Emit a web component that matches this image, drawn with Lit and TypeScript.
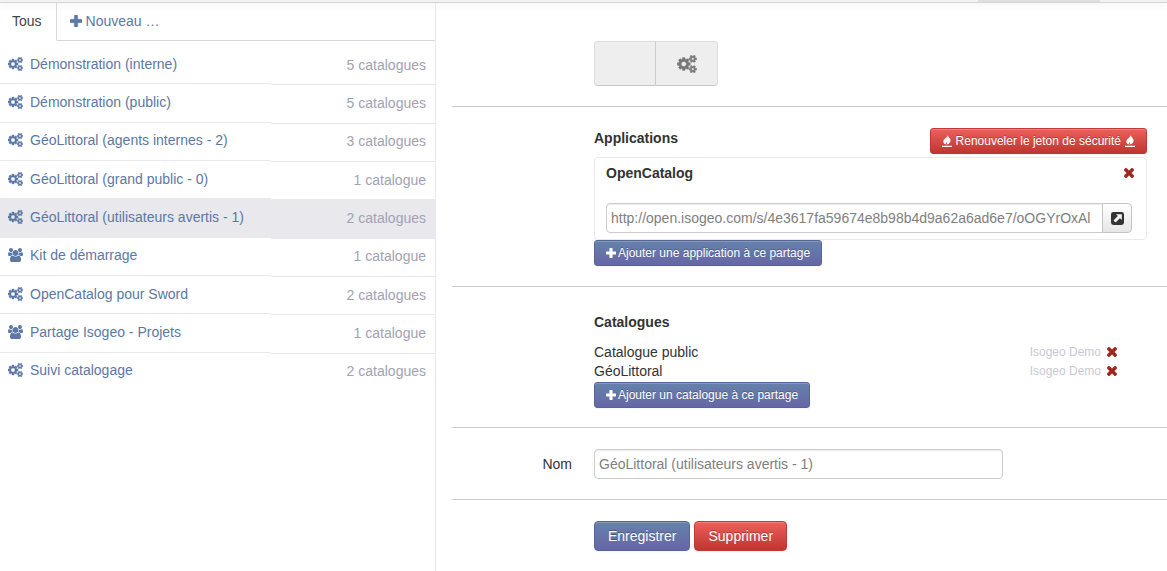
import { LitElement, html, css, svg, nothing } from "lit";
import { customElement } from "lit/decorators.js";
import { classMap } from "lit/directives/class-map.js";

const COGS =
  "M896 896q0-106-75-181t-181-75-181 75-75 181 75 181 181 75 181-75 75-181zm768 512q0-52-38-90t-90-38-90 38-38 90q0 53 37.5 90.5t90.5 37.5 90.5-37.5 37.5-90.5zm0-1024q0-52-38-90t-90-38-90 38-38 90q0 53 37.5 90.5t90.5 37.5 90.5-37.5 37.5-90.5zm-384 421v185q0 10-7 19.5t-16 10.5l-155 24q-11 35-32 76 34 48 90 115 7 11 7 20 0 12-7 19-23 30-82.5 89.5t-78.5 59.5q-11 0-21-7l-115-90q-37 19-77 31-11 108-23 155-7 24-30 24h-186q-11 0-20-7.5t-10-17.5l-23-153q-34-10-75-31l-118 89q-7 7-20 7-11 0-21-8-144-133-144-160 0-9 7-19 10-14 41-53t47-61q-23-44-35-82l-152-24q-10-1-17-9.5t-7-19.5v-185q0-10 7-19.5t16-10.5l155-24q11-35 32-76-34-48-90-115-7-11-7-20 0-12 7-20 22-30 82-89t79-59q11 0 21 7l115 90q34-18 77-32 11-108 23-154 7-24 30-24h186q11 0 20 7.5t10 17.5l23 153q34 10 75 31l118-89q8-7 20-7 11 0 21 8 144 133 144 160 0 8-7 19-12 16-42 54t-45 60q23 48 34 82l152 23q10 2 17 10.5t7 19.5zm640 533v140q0 16-149 31-12 27-30 52 51 113 51 138 0 4-4 7-122 71-124 71-8 0-46-47t-52-68q-20 2-30 2t-30-2q-14 21-52 68t-46 47q-2 0-124-71-4-3-4-7 0-25 51-138-18-25-30-52-149-15-149-31v-140q0-16 149-31 13-29 30-52-51-113-51-138 0-4 4-7 4-2 35-20t59-34 30-16q8 0 46 46.5t52 67.5q20-2 30-2t30 2q51-71 92-112l6-2q4 0 124 70 4 3 4 7 0 25-51 138 17 23 30 52 149 15 149 31zm0-1024v140q0 16-149 31-12 27-30 52 51 113 51 138 0 4-4 7-122 71-124 71-8 0-46-47t-52-68q-20 2-30 2t-30-2q-14 21-52 68t-46 47q-2 0-124-71-4-3-4-7 0-25 51-138-18-25-30-52-149-15-149-31v-140q0-16 149-31 13-29 30-52-51-113-51-138 0-4 4-7 4-2 35-20t59-34 30-16q8 0 46 46.5t52 67.5q20-2 30-2t30 2q51-71 92-112l6-2q4 0 124 70 4 3 4 7 0 25-51 138 17 23 30 52 149 15 149 31z";
const USERS =
  "M593 896q-162 5-265 128h-134q-82 0-138-40.5t-56-118.5q0-353 124-353 6 0 43.5 21t97.5 42.5 119 21.5q67 0 133-23-5 37-5 66 0 139 81 256zm1071 637q0 120-73 189.5t-194 69.5h-874q-121 0-194-69.5t-73-189.5q0-53 3.5-103.5t14-109 26.5-108.5 43-97.5 62-81 85.5-53.5 111.5-20q10 0 43 21.5t73 48 107 48 135 21.5 135-21.5 107-48 73-48 43-21.5q61 0 111.5 20t85.5 53.5 62 81 43 97.5 26.5 108.5 14 109 3.5 103.5zm-1024-1277q0 106-75 181t-181 75-181-75-75-181 75-181 181-75 181 75 75 181zm704 384q0 159-112.5 271.5t-271.5 112.5-271.5-112.5-112.5-271.5 112.5-271.5 271.5-112.5 271.5 112.5 112.5 271.5zm576 225q0 78-56 118.5t-138 40.5h-134q-103-123-265-128 81-117 81-256 0-29-5-66 66 23 133 23 59 0 119-21.5t97.5-42.5 43.5-21q124 0 124 353zm-128-609q0 106-75 181t-181 75-181-75-75-181 75-181 181-75 181 75 75 181z";
const PLUS =
  "M1600 736v192q0 40-28 68t-68 28h-416v416q0 40-28 68t-68 28h-192q-40 0-68-28t-28-68v-416h-416q-40 0-68-28t-28-68v-192q0-40 28-68t68-28h416v-416q0-40 28-68t68-28h192q40 0 68 28t28 68v416h416q40 0 68 28t28 68z";
const CROSS =
  "M1490 1322q0 40-28 68l-136 136q-28 28-68 28t-68-28l-294-294-294 294q-28 28-68 28t-68-28l-136-136q-28-28-28-68t28-68l294-294-294-294q-28-28-28-68t28-68l136-136q28-28 68-28t68 28l294 294 294-294q28-28 68-28t68 28l136 136q28 28 28 68t-28 68l-294 294 294 294q28 28 28 68z";

const shapes = {
  cogs: { box: "0 0 1920 1792", body: svg`<path stroke="currentColor" stroke-width="50" d=${COGS} />` },
  users: { box: "0 0 1920 1792", body: svg`<path d=${USERS} />` },
  plus: { box: "192 128 1408 1408", body: svg`<path stroke="currentColor" stroke-width="60" d=${PLUS} />` },
  cross: { box: "302 366 1188 1188", body: svg`<path stroke="currentColor" stroke-width="60" d=${CROSS} />` },
  burn: {
    box: "0 0 10 12",
    body: svg`<path d="M5.4 0C6 2 8.8 3.4 8.6 5.8 8.4 8.2 6.4 9.6 4 9.6 5.2 8.8 5.2 7.8 5 7.2 4.2 7.6 3.7 8.4 3.6 9.4 1.6 8.6 .9 6.8 1.6 5.2 2.4 3.4 5.4 2.6 5.4 0ZM0 10.8h10V12H0Z" />`,
  },
  open: {
    box: "0 0 12 12",
    body: svg`<path fill-rule="evenodd" d="M2.2 0h7.6Q12 0 12 2.2v7.6Q12 12 9.8 12H2.2Q0 12 0 9.8V2.2Q0 0 2.2 0ZM4.6 2 6.3 3.8 2.3 7.8 4.2 9.7 8.2 5.7 10 7.4V2Z" />`,
  },
};

type IconName = keyof typeof shapes;

const icon = (name: IconName, size: string) => html`
  <svg class="icon ${size}" viewBox=${shapes[name].box} aria-hidden="true">${shapes[name].body}</svg>
`;

interface Share {
  name: string;
  kind: IconName;
  count: number;
}

const SHARES: Share[] = [
  { name: "Démonstration (interne)", kind: "cogs", count: 5 },
  { name: "Démonstration (public)", kind: "cogs", count: 5 },
  { name: "GéoLittoral (agents internes - 2)", kind: "cogs", count: 3 },
  { name: "GéoLittoral (grand public - 0)", kind: "cogs", count: 1 },
  { name: "GéoLittoral (utilisateurs avertis - 1)", kind: "cogs", count: 2 },
  { name: "Kit de démarrage", kind: "users", count: 1 },
  { name: "OpenCatalog pour Sword", kind: "cogs", count: 2 },
  { name: "Partage Isogeo - Projets", kind: "users", count: 1 },
  { name: "Suivi catalogage", kind: "cogs", count: 2 },
];
const SELECTED = 4;

const CATALOGS = ["Catalogue public", "GéoLittoral"];

const base = css`
  * {
    box-sizing: border-box;
  }
  .icon {
    display: block;
    flex: none;
    fill: currentColor;
  }
  .s10 {
    width: 10px;
    height: 10px;
  }
  .s12 {
    width: 12px;
    height: 12px;
  }
  .s13 {
    width: 13px;
    height: 13px;
  }
  .burn {
    width: 10px;
    height: 12px;
  }
  .s15 {
    width: 15px;
    height: 14px;
  }
  .s20 {
    width: 20px;
    height: 18px;
  }
  a {
    color: #5b78a6;
    text-decoration: none;
  }
`;

@customElement("share-list")
export class ShareList extends LitElement {
  static styles = [
    base,
    css`
      :host {
        display: block;
        border-right: 1px solid #e8e8ed;
      }
      .tabs {
        display: flex;
        height: 38px;
        line-height: 20px;
      }
      .tab {
        display: flex;
        align-items: center;
        gap: 4px;
        padding: 0 13px 2px;
        border-bottom: 1px solid #d8d8dc;
      }
      .tab.active {
        color: #444;
        padding-left: 12px;
        padding-right: 14px;
        border-right: 1px solid #d8d8dc;
        border-bottom-color: transparent;
      }
      .tab.new {
        flex: 1;
      }
      .list {
        display: grid;
        grid-auto-rows: 1fr;
        min-height: 345px;
        margin: 5px 0 0;
        padding: 0;
        list-style: none;
      }
      .row {
        display: grid;
        grid-template-columns: minmax(0, 271fr) minmax(0, 164fr);
      }
      .name,
      .count {
        display: flex;
        align-items: center;
        padding: 7px 9px 9px 8px;
        border-bottom: 1px solid #e8e8ed;
      }
      .name {
        gap: 7px;
      }
      .count {
        justify-content: flex-end;
        margin: 1px 0 -1px;
        color: #a3a1b5;
      }
      .row:last-child .name,
      .row:last-child .count {
        border-bottom-color: transparent;
      }
      .selected .name,
      .selected .count {
        background: #e8e8ed;
      }
    `,
  ];

  render() {
    return html`
      <nav class="tabs">
        <a class="tab active" href="#tous">Tous</a>
        <a class="tab new" href="#nouveau">${icon("plus", "s12")}Nouveau …</a>
      </nav>
      <ul class="list">
        ${SHARES.map(
          (share, i) => html`
            <li class=${classMap({ row: true, selected: i === SELECTED })}>
              <a class="name" href="#partage-${i}" aria-current=${i === SELECTED ? "true" : nothing}>
                ${icon(share.kind, "s15")}${share.name}
              </a>
              <span class="count">${share.count} ${share.count > 1 ? "catalogues" : "catalogue"}</span>
            </li>
          `,
        )}
      </ul>
    `;
  }
}

@customElement("share-form")
export class ShareForm extends LitElement {
  static styles = [
    base,
    css`
      :host {
        display: block;
        padding-left: 16px;
      }
      .section {
        display: grid;
        grid-template-columns: 120px minmax(0, 1fr);
        column-gap: 22px;
        padding: 21px 20px 20px 0;
        border-bottom: 1px solid #c9c9d6;
      }
      .section:first-child {
        padding-top: 38px;
      }
      .section:last-child {
        border-bottom: 0;
      }
      .section.listing {
        padding-top: 25px;
        padding-bottom: 19px;
      }
      .label {
        align-self: center;
        text-align: right;
      }
      .content {
        grid-column: 2;
        min-width: 0;
      }
      .title {
        margin: 0;
        font-size: 14px;
        line-height: 20px;
        font-weight: bold;
      }
      .head {
        display: flex;
        justify-content: space-between;
        align-items: flex-start;
        margin-bottom: 3px;
      }
      .toggle {
        display: inline-flex;
        vertical-align: top;
      }
      .choice {
        display: grid;
        place-items: center;
        width: 62px;
        height: 45px;
        padding: 0;
        border: 1px solid #dcdcdc;
        border-bottom-color: #c6c6c6;
        background: #eee;
        color: #777;
      }
      .choice:first-child {
        border-radius: 4px 0 0 4px;
        border-right-color: #ccc;
      }
      .choice:last-child {
        border-left: 0;
        border-radius: 0 4px 4px 0;
      }
      .btn {
        display: inline-flex;
        align-items: center;
        justify-content: center;
        height: 30px;
        padding: 0 13px;
        border: 1px solid #56649a;
        border-radius: 4px;
        background: linear-gradient(#6482ab, #6766a6);
        box-shadow: inset 0 1px 0 rgba(255, 255, 255, 0.2), 0 1px 2px rgba(0, 0, 0, 0.05);
        color: #fff;
        font: 14px/20px "Liberation Sans", Arial, sans-serif;
        text-shadow: 0 -1px 0 rgba(0, 0, 0, 0.25);
        white-space: nowrap;
        vertical-align: top;
      }
      .small {
        gap: 2px;
        height: 26px;
        padding: 0 11px;
        border-radius: 3px;
        font-size: 12px;
      }
      .danger {
        border-color: #bd3a36;
        background: linear-gradient(#ee5f5b, #bd362f);
      }
      .small.danger {
        gap: 4px;
      }
      .card {
        padding: 5px 14px 6px 11px;
        border: 1px solid #e8e8ed;
        border-radius: 4px;
      }
      .cardhead {
        display: flex;
        justify-content: space-between;
        align-items: center;
        margin-bottom: 20px;
      }
      .remove {
        padding: 0;
        border: 0;
        background: none;
        color: #9d261d;
      }
      .cardhead .remove {
        margin-right: -2px;
      }
      .field {
        width: 100%;
        height: 30px;
        padding: 4px;
        border: 1px solid #ccc;
        border-radius: 4px;
        background: #fff;
        box-shadow: inset 0 1px 1px rgba(0, 0, 0, 0.075);
        color: #808080;
        font: 14px/20px "Liberation Sans", Arial, sans-serif;
      }
      .group {
        display: flex;
      }
      .group .field {
        flex: 1;
        min-width: 0;
        border-radius: 4px 0 0 4px;
      }
      .addon {
        display: grid;
        place-items: center;
        width: 30px;
        height: 30px;
        margin-left: -1px;
        padding: 0;
        border: 1px solid #c5c5c5;
        border-radius: 0 4px 4px 0;
        background: linear-gradient(#fff, #e6e6e6);
        color: #333;
      }
      .catalogs {
        margin: 10px 0 2px;
        padding: 0 30px 0 0;
        list-style: none;
      }
      .catalog {
        display: flex;
        align-items: center;
        gap: 6px;
        height: 19px;
      }
      .owner {
        margin-left: auto;
        color: #c9c9d6;
        font-size: 12px;
      }
      .medium {
        width: 74%;
      }
      .actions {
        display: flex;
        gap: 4px;
      }
    `,
  ];

  render() {
    return html`
      <section class="section">
        <div class="content">
          <div class="toggle">
            <button class="choice" type="button" aria-label="Groupes"></button>
            <button class="choice" type="button" aria-label="Applications">${icon("cogs", "s20")}</button>
          </div>
        </div>
      </section>
      <section class="section">
        <div class="content">
          <div class="head">
            <h2 class="title">Applications</h2>
            <button class="btn small danger" type="button">
              ${icon("burn", "burn")}Renouveler le jeton de sécurité${icon("burn", "burn")}
            </button>
          </div>
          <div class="card">
            <div class="cardhead">
              <h3 class="title">OpenCatalog</h3>
              <button class="remove" type="button" aria-label="Retirer OpenCatalog">${icon("cross", "s10")}</button>
            </div>
            <div class="group">
              <input
                class="field"
                type="text"
                readonly
                aria-label="OpenCatalog"
                .value=${"http://open.isogeo.com/s/4e3617fa59674e8b98b4d9a62a6ad6e7/oOGYrOxAl"}
              />
              <button class="addon" type="button" aria-label="Ouvrir">${icon("open", "s13")}</button>
            </div>
          </div>
          <button class="btn small" type="button">${icon("plus", "s10")}Ajouter une application à ce partage</button>
        </div>
      </section>
      <section class="section listing">
        <div class="content">
          <h2 class="title">Catalogues</h2>
          <ul class="catalogs">
            ${CATALOGS.map(
              (name) => html`
                <li class="catalog">
                  <span>${name}</span>
                  <span class="owner">Isogeo Demo</span>
                  <button class="remove" type="button" aria-label="Retirer ${name}">${icon("cross", "s10")}</button>
                </li>
              `,
            )}
          </ul>
          <button class="btn small" type="button">${icon("plus", "s10")}Ajouter un catalogue à ce partage</button>
        </div>
      </section>
      <section class="section">
        <label class="label" for="nom">Nom</label>
        <div class="content">
          <input id="nom" class="field medium" type="text" .value=${"GéoLittoral (utilisateurs avertis - 1)"} />
        </div>
      </section>
      <section class="section">
        <div class="content actions">
          <button class="btn" type="submit">Enregistrer</button>
          <button class="btn danger" type="button">Supprimer</button>
        </div>
      </section>
    `;
  }
}

@customElement("app-root")
export class AppRoot extends LitElement {
  static styles = [
    base,
    css`
      :host {
        display: flex;
        flex-direction: column;
        min-height: 100vh;
        background: #fff;
        color: #333;
        font: 14px/20px "Liberation Sans", Arial, sans-serif;
      }
      .bar {
        display: grid;
        grid-template-columns: 978fr 122fr 67fr;
        height: 3px;
        border-bottom: 1px solid #d4d4d4;
        background: #f2f2f2;
        box-shadow: 0 1px 10px rgba(0, 0, 0, 0.1);
      }
      .current {
        grid-column: 2;
        background: #dedede;
      }
      .page {
        flex: 1;
        display: grid;
        grid-template-columns: minmax(280px, 436fr) minmax(0, 731fr);
      }
    `,
  ];

  render() {
    return html`
      <header class="bar"><span class="current"></span></header>
      <main class="page">
        <share-list></share-list>
        <share-form></share-form>
      </main>
    `;
  }
}
